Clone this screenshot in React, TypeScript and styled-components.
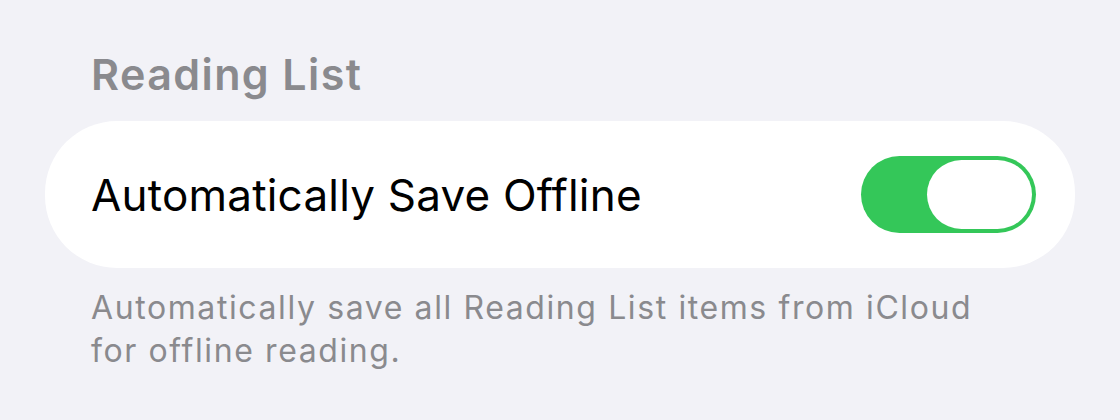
import React from "react";
import styled, { createGlobalStyle } from "styled-components";

const Global = createGlobalStyle`
  html, body { margin: 0; padding: 0; background: #f2f2f7; }
  body { font-family: Inter, "Noto Sans", sans-serif; -webkit-font-smoothing: antialiased; }
`;

const Page = styled.div`
  width: 1120px;
  height: 420px;
  box-sizing: border-box;
  padding: 49px 45px 0 45px;
  background: #f2f2f7;
  display: flex;
  flex-direction: column;
`;

const Header = styled.div`
  padding-left: 46px;
  font-size: 43px;
  font-weight: 600;
  letter-spacing: 1.4px;
  color: #8a8a8e;
  line-height: 50px;
  height: 72px;
`;

const Card = styled.div`
  background: #ffffff;
  border-radius: 72px;
  height: 147px;
  display: flex;
  align-items: center;
  justify-content: space-between;
  padding: 0 39px 0 46px;
`;

const Label = styled.div`
  font-size: 44px;
  letter-spacing: 0.2px;
  color: #000;
  font-weight: 400;
`;

const Toggle = styled.div<{ $on: boolean }>`
  width: 175px;
  height: 77px;
  border-radius: 39px;
  background: ${(p) => (p.$on ? "#34c759" : "#e9e9eb")};
  box-sizing: border-box;
  padding: 4px;
  display: flex;
  justify-content: ${(p) => (p.$on ? "flex-end" : "flex-start")};
`;

const Knob = styled.div`
  width: 105px;
  height: 69px;
  border-radius: 35px;
  background: #ffffff;
`;

const Footer = styled.div`
  padding: 18px 0 0 46px;
  font-size: 32px;
  letter-spacing: 1.6px;
  line-height: 43px;
  color: #8a8a8e;
  width: 960px;
`;

export default function App() {
  return (
    <>
      <Global />
      <Page>
        <Header>Reading List</Header>
        <Card>
          <Label>Automatically Save Offline</Label>
          <Toggle $on={true}>
            <Knob />
          </Toggle>
        </Card>
        <Footer>
          Automatically save all Reading List items from iCloud
          <br />
          for offline reading.
        </Footer>
      </Page>
    </>
  );
}
